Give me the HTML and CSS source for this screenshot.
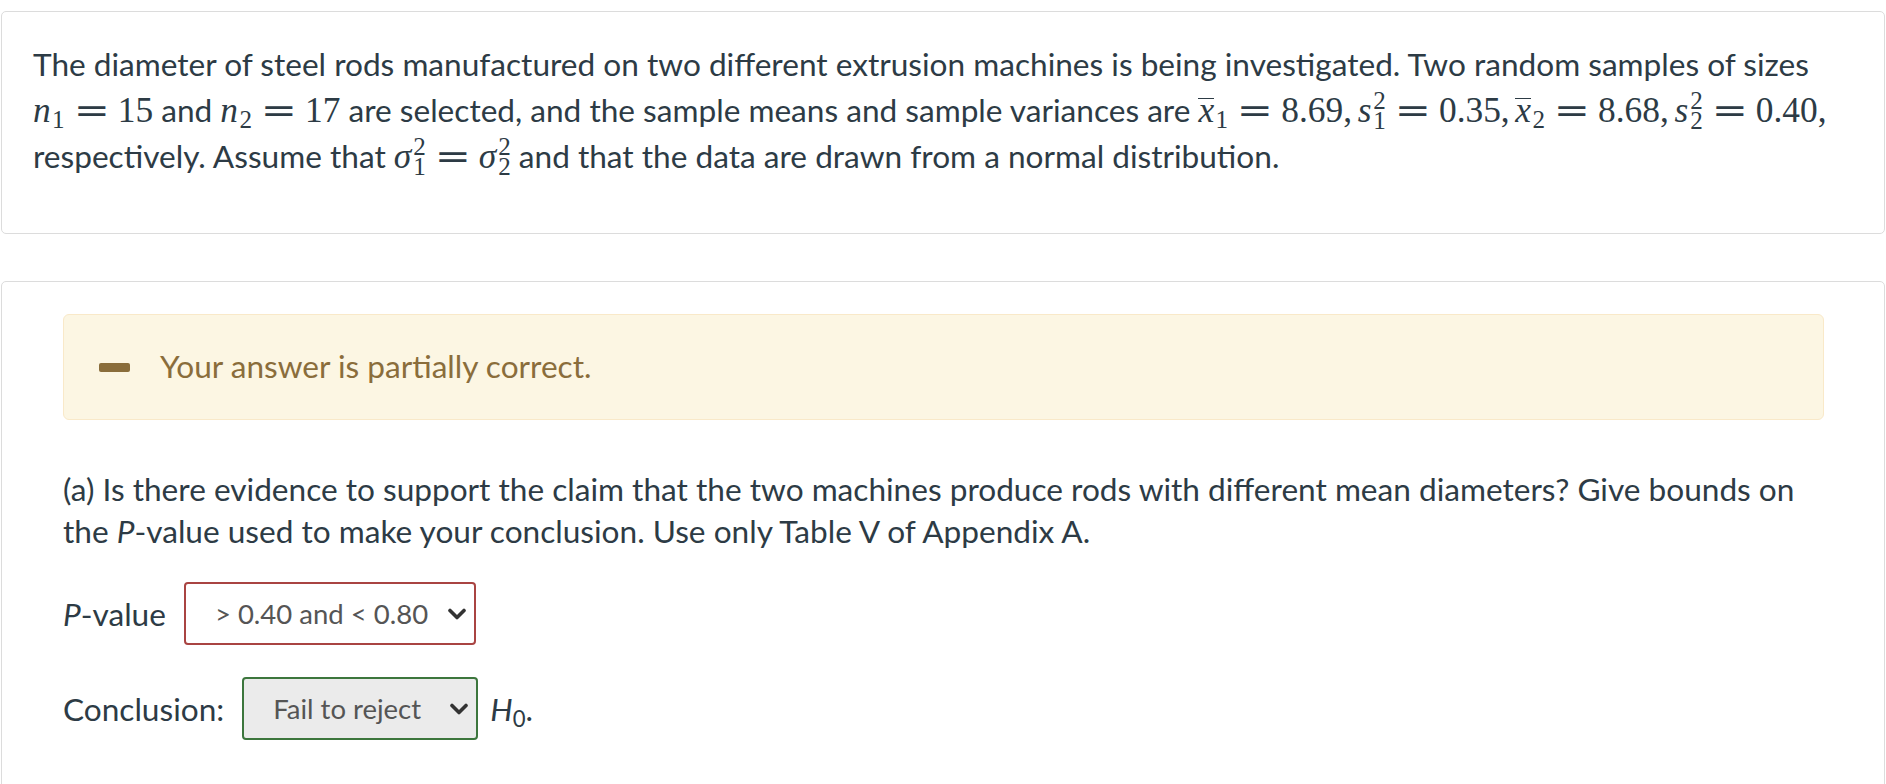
FILE: index.html
```html
<!DOCTYPE html>
<html lang="en">
<head>
<meta charset="utf-8">
<title>Question</title>
<link rel="stylesheet" href="styles.css">
</head>
<body>
<div class="page">
  <section class="card card-question">
    <p class="stem">The diameter of steel rods manufactured on two different extrusion machines is being investigated. Two random samples of sizes <span class="m"><i>n</i><sub>1</sub><span class="rel">=</span>15</span> and <span class="m"><i>n</i><sub>2</sub><span class="rel">=</span>17</span> are selected, and the sample means and sample variances are <span class="m"><i class="bar">x</i><sub>1</sub><span class="rel">=</span>8.69,<span class="thin"></span><i>s</i><span class="ss"><span>2</span><span>1</span></span><span class="rel">=</span>0.35,<span class="thin"></span><i class="bar">x</i><sub>2</sub><span class="rel">=</span>8.68,<span class="thin"></span><i>s</i><span class="ss"><span>2</span><span>2</span></span><span class="rel">=</span>0.40,</span> respectively. Assume that <span class="m"><i>σ</i><span class="ss"><span>2</span><span>1</span></span><span class="rel">=</span><i>σ</i><span class="ss"><span>2</span><span>2</span></span></span> and that the data are drawn from a normal distribution.</p>
  </section>

  <section class="card card-answer">
    <div class="alert">
      <span class="minus" aria-hidden="true"></span>
      <span class="alert-text">Your answer is partially correct.</span>
    </div>

    <p class="part">(a) Is there evidence to support the claim that the two machines produce rods with different mean diameters? Give bounds on the <i>P</i>-value used to make your conclusion. Use only Table V of Appendix A.</p>

    <div class="row row-p">
      <span class="lbl"><i>P</i>-value</span>
      <div class="sel sel-error">
        <span class="sel-text">&gt; 0.40 and &lt; 0.80</span>
        <svg class="chev" width="18" height="12" viewBox="0 0 18 12"><path d="M2 2.5 L9 9.5 L16 2.5" fill="none" stroke="#333" stroke-width="3.6" stroke-linecap="round" stroke-linejoin="round"/></svg>
      </div>
    </div>

    <div class="row row-c">
      <span class="lbl">Conclusion:</span>
      <div class="sel sel-ok">
        <span class="sel-text">Fail to reject</span>
        <svg class="chev" width="18" height="12" viewBox="0 0 18 12"><path d="M2 2.5 L9 9.5 L16 2.5" fill="none" stroke="#333" stroke-width="3.6" stroke-linecap="round" stroke-linejoin="round"/></svg>
      </div>
      <span class="h0"><i>H</i><sub>0</sub>.</span>
    </div>
  </section>
</div>
</body>
</html>
```

FILE: styles.css
```css
html, body {
  margin: 0;
  padding: 0;
  background: #ffffff;
}

body {
  font-family: Lato, "Open Sans", "Liberation Sans", sans-serif;
  font-size: 31.6px;
  color: #2d3b45;
  overflow: hidden;
}

.page {
  display: flex;
  flex-direction: column;
  padding: 11px 0 0 1px;
  gap: 47px;
  width: 1885px;
  box-sizing: border-box;
}

.card {
  border: 1px solid #dcdcdc;
  border-radius: 5px;
  background: #fff;
}

.card-question {
  padding: 29px 31px 54px 31px;
}

.stem {
  margin: 0;
  line-height: 46px;
}

/* inline math */
.m {
  font-family: "Liberation Serif", "Times New Roman", serif;
  font-size: 1.12em;
  white-space: nowrap;
  line-height: 1;
}
.m i {
  font-style: italic;
  margin-right: 0.04em;
}
.m sub {
  font-size: 0.71em;
  vertical-align: -0.24em;
  line-height: 0;
}
.rel {
  display: inline-block;
  font-family: "DejaVu Serif", serif;
  width: 0.9em;
  text-align: center;
  transform: scaleX(1.22);
  margin: 0 0.28em 0 0.32em;
}
.thin {
  display: inline-block;
  width: 0.16em;
}
.bar {
  display: inline-block;
  border-top: 1.5px solid currentColor;
  line-height: 0.62;
  padding-top: 0.04em;
}
.ss {
  display: inline-flex;
  flex-direction: column;
  vertical-align: 0.52em;
  font-size: 0.71em;
  line-height: 0.8;
  margin-left: 0.02em;
}

.card-answer {
  padding: 32px 60px 60px 61px;
  display: flex;
  flex-direction: column;
}

.alert {
  display: flex;
  align-items: center;
  height: 106px;
  box-sizing: border-box;
  padding-left: 35px;
  background: #fcf6e3;
  border: 1.5px solid #f9e9c9;
  border-radius: 6px;
  color: #8a6d3b;
}
.minus {
  width: 31px;
  height: 9px;
  border-radius: 2px;
  background: #8a6d3b;
  margin-right: 30px;
}
.alert-text {
  line-height: 1;
}

.part {
  margin: 48px 0 0 0;
  line-height: 42px;
}

.row {
  display: flex;
  align-items: center;
}
.row-p {
  margin-top: 30px;
}
.row-c {
  margin-top: 32px;
}

.lbl {
  margin-right: 18px;
}

.sel {
  display: flex;
  align-items: center;
  justify-content: space-between;
  box-sizing: border-box;
  height: 63px;
  border-radius: 4px;
  color: #555;
  padding: 0 8px 0 29px;
  font-size: 27.5px;
}
.sel-error {
  width: 292px;
  border: 2px solid #a94442;
  background: #fff;
}
.sel-ok {
  width: 236px;
  border: 2px solid #3c763d;
  background: #ebebeb;
}
.sel-text {
  line-height: 1;
}
.chev {
  display: block;
}

.h0 {
  margin-left: 12px;
}
.h0 sub {
  font-size: 0.7em;
  vertical-align: -0.25em;
  line-height: 0;
}
```
